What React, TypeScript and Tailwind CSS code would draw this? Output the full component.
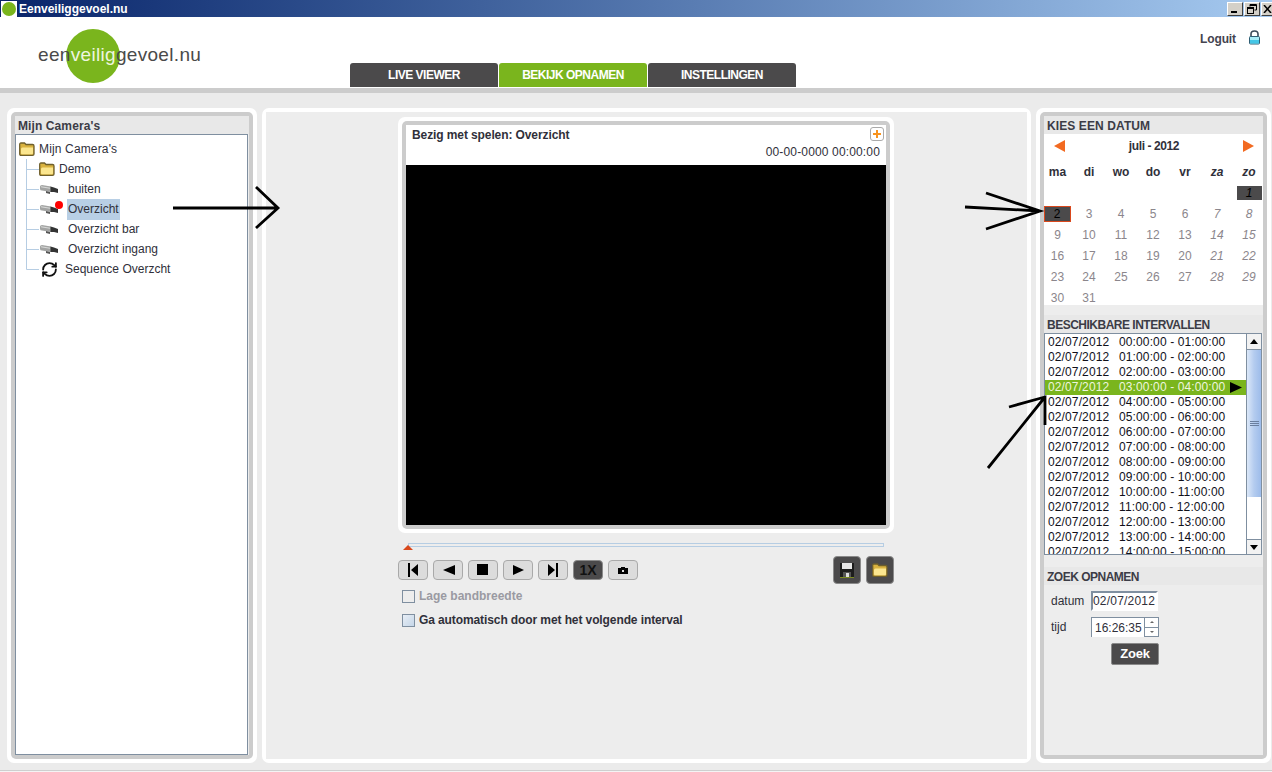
import React from "react";
import { RefreshCw } from "lucide-react";

const Folder = () => (
  <svg width="16" height="14" viewBox="0 0 16 14" className="shrink-0">
    <path d="M.7 2.5Q.7 1 2 1H5.5L7 2.5H13.5Q15 2.5 15 4V12Q15 13.3 13.5 13.3H2Q.7 13.3 .7 12Z" fill="#d9b23f" stroke="#6e5f2c" strokeWidth="1.3" />
    <path d="M2 7Q2 5.5 3.5 5.5H14V11Q14 12.3 13 12.3H3Q2 12.3 2 11Z" fill="#fbe68f" />
  </svg>
);

const Camera = () => (
  <svg width="18" height="11" viewBox="0 0 18 11" className="shrink-0">
    <path d="M0 2.5Q0 1 2 1L11 2.5V8L2 6.5Q0 6.5 0 5Z" fill="#a3a4a3" />
    <path d="M1 2.2L10 3.7V4.7L1 3.2Z" fill="#d8d9d8" />
    <path d="M10.5 2.5L14 3.5L18 5V9L14 8L10.5 8Z" fill="#333434" />
    <path d="M6 7L10 8V10L6 9Z" fill="#555" />
  </svg>
);

const Connector = ({ last }: { last?: boolean }) => (
  <svg width="13" height="20" viewBox="0 0 13 20" className="shrink-0">
    <path d={last ? "M.5 0V10.5H13" : "M.5 0V20M.5 10.5H13"} stroke="#b6cde3" fill="none" />
  </svg>
);

const Lock = () => (
  <svg width="13" height="15" viewBox="0 0 13 15">
    <path d="M3 7V4Q3 1 6.5 1T10 4V7" fill="none" stroke="#3b4a5a" strokeWidth="1.6" />
    <rect x="1.5" y="6.5" width="10" height="7.5" rx="1" fill="#a6ecf8" stroke="#2f5e74" />
    <rect x="2" y="10" width="9" height="3.5" fill="#45c6e6" />
  </svg>
);

const WinBtn = ({ children, w = "w-[16px]" }: { children: React.ReactNode; w?: string }) => (
  <div className={`${w} h-[14px] bg-[#d4d0c8] border border-t-white border-l-white border-r-[#404040] border-b-[#404040] flex items-center justify-center`}>
    {children}
  </div>
);

const Tab = ({ label, active, w }: { label: string; active?: boolean; w: string }) => (
  <div className={`${w} h-[24px] rounded-t-[3px] flex items-center justify-center text-white text-[12px] font-bold tracking-[-0.5px] ${active ? "bg-[#7ab51d]" : "bg-[#4b4a4b]"}`}>
    {label}
  </div>
);

const Title = ({ children, tight }: { children: React.ReactNode; tight?: boolean }) => (
  <div className={`h-[18px] shrink-0 bg-[#e8e8e8] pl-[3px] pt-[2px] flex items-center text-[12px] font-bold text-[#3c3c46] ${tight ? "tracking-[-0.5px]" : "tracking-[0.1px]"}`}>{children}</div>
);

const Panel = ({ w, children }: { w: string; children: React.ReactNode }) => (
  <div className={`${w} h-[655px] bg-white rounded-[7px] p-[4px]`}>
    <div className="h-full bg-[#cccccc] rounded-[5px] p-[4px]">
      <div className="h-full bg-[#ededed] flex flex-col">{children}</div>
    </div>
  </div>
);

const Ctl = ({ children, dark }: { children: React.ReactNode; dark?: boolean }) => (
  <div className={`w-[30px] h-[20px] rounded-[4px] border flex items-center justify-center ${dark ? "bg-[#4b4a4b] border-[#8a8a8a]" : "bg-[#dcdcdc] border-[#a9a9a9]"}`}>
    {children}
  </div>
);

const treeCams = ["buiten", "Overzicht", "Overzicht bar", "Overzicht ingang"];
const week = ["ma", "di", "wo", "do", "vr", "za", "zo"];
const days: (number | null)[] = [null, null, null, null, null, null, 1];
for (let d = 2; d <= 31; d++) days.push(d);

const Day = ({ d, i }: { d: number | null; i: number }) => {
  const weekend = i % 7 >= 5;
  let inner = <span className={`text-[#8b868c] ${weekend ? "italic" : ""}`}>{d}</span>;
  if (d === 1)
    inner = <span className="w-[25px] h-[14px] bg-[#4b4a4b] text-black italic flex items-center justify-center">1</span>;
  if (d === 2)
    inner = <span className="w-[27px] h-[16px] bg-[#4b4a4b] border border-[#d9481c] text-black flex items-center justify-center -ml-[1px]">2</span>;
  return <div className="h-[21px] flex items-center justify-center text-[12px]">{d ? inner : null}</div>;
};

const Ctrl = [
  <svg key="a" width="12" height="14" viewBox="0 0 12 14"><path d="M1 0H3V14H1ZM11 1V13L4 7Z" /></svg>,
  <svg key="b" width="13" height="12" viewBox="0 0 13 12"><path d="M13 1V11L1 6Z" /></svg>,
  <svg key="c" width="12" height="12" viewBox="0 0 12 12"><rect width="11" height="11" /></svg>,
  <svg key="d" width="13" height="12" viewBox="0 0 13 12"><path d="M1 1V11L12 6Z" /></svg>,
  <svg key="e" width="12" height="14" viewBox="0 0 12 14"><path d="M9 0H11V14H9ZM1 1V13L8 7Z" /></svg>,
];

export default function App() {
  return (
    <div className="relative w-[1272px] h-[772px] overflow-hidden flex flex-col bg-[#ebebeb] font-['Liberation_Sans',sans-serif] text-[12px] text-[#30303a]">
      {/* title bar */}
      <div className="h-[17px] shrink-0 bg-gradient-to-r from-[#0a246a] to-[#a6caf0] flex items-center pl-[1px]">
        <div className="w-[16px] h-[16px] bg-white flex items-center justify-center">
          <div className="w-[14px] h-[14px] rounded-full bg-[#7ab51d]" />
        </div>
        <span className="ml-[2px] text-white font-bold text-[12px]">Eenveiliggevoel.nu</span>
        <div className="ml-auto flex items-center gap-[1px] -mr-[2px]">
          <WinBtn><svg width="8" height="8" viewBox="0 0 8 8"><rect x="0" y="6" width="6" height="2" /></svg></WinBtn>
          <WinBtn><svg width="10" height="10" viewBox="0 0 10 10" fill="none" stroke="#000"><path d="M3 2.5V.5H9.5V6H7.5" /><path d="M3 1.5H9" /><rect x=".5" y="3.5" width="6" height="6" /><path d="M1 4.5H6" /></svg></WinBtn>
          <WinBtn w="w-[13px]"><svg width="9" height="8" viewBox="0 0 9 8" stroke="#000" strokeWidth="1.5"><path d="M1 0L8 8M8 0L1 8" /></svg></WinBtn>
        </div>
      </div>

      {/* header */}
      <div className="h-[71px] shrink-0 bg-white flex">
        <div className="w-[350px] shrink-0 pl-[38px] pt-[26px]">
          <div className="relative text-[19px] leading-[24px] tracking-[0.32px] text-[#4a4a4a] whitespace-nowrap">
            <div className="absolute left-[28px] -top-[14px] w-[54px] h-[54px] rounded-full bg-[#7ab51d]" />
            <span className="relative">een<span className="text-[#eef5df]">veilig</span>gevoel.nu</span>
          </div>
        </div>
        <div className="self-end flex gap-[1px] mb-[1px]">
          <Tab label="LIVE VIEWER" w="w-[148px]" />
          <Tab label="BEKIJK OPNAMEN" active w="w-[148px]" />
          <Tab label="INSTELLINGEN" w="w-[148px]" />
        </div>
        <div className="ml-auto pt-[13px] pr-[11px] flex items-start gap-[12px]">
          <span className="font-bold text-[#44444f] tracking-[-0.1px]">Loguit</span>
          <Lock />
        </div>
      </div>
      <div className="h-[5px] shrink-0 bg-[#cccccc]" />

      {/* body */}
      <div className="flex-1 flex gap-[5px] pl-[7px] pt-[15px]">
        {/* left */}
        <Panel w="w-[250px]">
          <Title>Mijn Camera's</Title>
          <div className="mr-[1px] h-[621px] bg-white border border-[#7f8fa0] pl-[3px] pt-[4px]">
            <div className="h-[20px] flex items-center gap-[4px]">
              <Folder />
              <span className="tracking-[0.15px]">Mijn Camera's</span>
            </div>
            <div className="ml-[7px]">
              <div className="h-[20px] flex items-center">
                <Connector />
                <Folder />
                <span className="ml-[4px]">Demo</span>
              </div>
              {treeCams.map((name) => (
                <div key={name} className="h-[20px] flex items-center">
                  <Connector />
                  <div className="relative w-[28px] pl-[1px]">
                    <Camera />
                    {name === "Overzicht" && (
                      <div className="absolute left-[16px] -top-[3px] w-[8px] h-[8px] rounded-full bg-[#ff0000]" />
                    )}
                  </div>
                  {name === "Overzicht" ? (
                    <span className="h-[21px] w-[53px] bg-[#b8cfe5] pl-[1px] flex items-center">{name}</span>
                  ) : (
                    <span className="pl-[1px]">{name}</span>
                  )}
                </div>
              ))}
              <div className="h-[20px] flex items-center">
                <Connector last />
                <RefreshCw size={17} strokeWidth={2.6} color="#111" className="ml-[2px] shrink-0" />
                <span className="ml-[7px]">Sequence Overzcht</span>
              </div>
            </div>
          </div>
        </Panel>

        {/* center */}
        <div className="w-[769px] h-[655px] bg-white rounded-[7px] p-[4px]">
          <div className="h-full bg-[#ededed] pl-[132px] pt-[5px]">
            <div className="w-[496px] bg-white rounded-[7px] p-[4px]">
              <div className="bg-[#cccccc] rounded-[5px] p-[4px]">
                <div className="bg-white h-[40px] relative pl-[6px] pt-[1px]">
                  <div className="font-bold text-[12px] leading-[18px] tracking-[-0.1px]">Bezig met spelen: Overzicht</div>
                  <div className="text-right pr-[6px] leading-[17px] tracking-[0.15px]">00-00-0000 00:00:00</div>
                  <div className="absolute right-[2px] top-[2px] w-[14px] h-[14px] rounded-[3px] border border-[#aaa] flex items-center justify-center">
                    <svg width="10" height="10" viewBox="0 0 10 10"><path d="M4 1H6V4H9V6H6V9H4V6H1V4H4Z" fill="#f7931e" /></svg>
                  </div>
                </div>
                <div className="bg-black h-[360px]" />
              </div>
            </div>

            <div className="relative mt-[10px] ml-[10px] w-[476px] h-[4px] border border-[#b6cde3] bg-[#ededed]">
              <div className="absolute -left-[6px] top-[1px] w-0 h-0 border-l-[5px] border-r-[5px] border-b-[5px] border-l-transparent border-r-transparent border-b-[#d9481c]" />
            </div>

            <div className="mt-[9px] w-[496px] flex items-center gap-[5px] h-[28px]">
              {Ctrl.map((icon, i) => <Ctl key={i}>{icon}</Ctl>)}
              <Ctl dark><span className="text-[14px] font-bold text-[#111]">1X</span></Ctl>
              <Ctl>
                <svg width="10" height="8" viewBox="0 0 10 8"><path d="M3 1H7V2H10V8H0V2H3Z" /><rect x="4" y="4" width="2" height="2" fill="#dcdcdc" /></svg>
              </Ctl>
              <div className="ml-auto flex gap-[5px]">
                <div className="w-[28px] h-[28px] rounded-[4px] bg-[#4b4a4b] border border-[#8a8a8a] flex items-center justify-center">
                  <svg width="14" height="16" viewBox="0 0 14 16"><path d="M0 1H14V15H0Z" fill="#1d1d1d" /><rect x="2" y="1" width="10" height="6" fill="#e6e6e6" /><rect x="3" y="10" width="8" height="5" fill="#555" /><rect x="6" y="11" width="3" height="4" fill="#ddd" /><rect y="15" width="14" height="1" fill="#7a8a20" /></svg>
                </div>
                <div className="w-[28px] h-[28px] rounded-[4px] bg-[#4b4a4b] border border-[#8a8a8a] flex items-center justify-center">
                  <Folder />
                </div>
              </div>
            </div>

            <div className="mt-[5px] ml-[4px] h-[14px] flex items-center gap-[4px]">
              <div className="w-[13px] h-[13px] border border-[#7f8fa0]" />
              <span className="font-bold text-[#9a9aa2]">Lage bandbreedte</span>
            </div>
            <div className="mt-[10px] ml-[4px] h-[14px] flex items-center gap-[4px]">
              <div className="w-[13px] h-[13px] border border-[#7f8fa0] bg-gradient-to-br from-[#e8eef5] to-[#c5d6e8]" />
              <span className="font-bold tracking-[-0.1px]">Ga automatisch door met het volgende interval</span>
            </div>
          </div>
        </div>

        {/* right */}
        <Panel w="w-[235px]">
          <Title>KIES EEN DATUM</Title>
          <div className="h-[171px] shrink-0 bg-white overflow-hidden">
            <div className="h-[24px] flex items-center justify-between pl-[10px] pr-[9px]">
              <svg width="11" height="12" viewBox="0 0 11 12"><path d="M11 0V12L0 6Z" fill="#f26a21" /></svg>
              <span className="font-bold tracking-[-0.4px]">juli - 2012</span>
              <svg width="11" height="12" viewBox="0 0 11 12"><path d="M0 0V12L11 6Z" fill="#f26a21" /></svg>
            </div>
            <div className="-ml-[2px] grid grid-cols-[31px_repeat(6,32px)] mt-[3px]">
              {week.map((w, i) => (
                <div key={w} className={`h-[21px] flex items-center justify-center font-bold text-[12px] ${i >= 5 ? "italic" : ""}`}>{w}</div>
              ))}
              {days.map((d, i) => <Day key={i} d={d} i={i} />)}
            </div>
          </div>

          <div className="h-[10px] shrink-0" />
          <Title tight>BESCHIKBARE INTERVALLEN</Title>
          <div className="h-[222px] shrink-0 mr-[1px] bg-white border border-[#7f8fa0] flex overflow-hidden">
            <div className="flex-1 overflow-hidden pt-[1px]">
              {Array.from({ length: 15 }, (_, h) => {
                const p = (n: number) => String(n).padStart(2, "0");
                const sel = h === 3;
                return (
                  <div key={h} className={`h-[15px] leading-[15px] pl-[3px] flex items-center text-[12px] tracking-[0.12px] whitespace-nowrap ${sel ? "bg-[#7ab51d] text-[#eef5df]" : "text-[#10101a]"}`}>
                    <span className="w-[71px]">02/07/2012</span>
                    <span>{p(h)}:00:00 - {p(h + 1)}:00:00</span>
                    {sel && <svg width="12" height="11" viewBox="0 0 12 11" className="ml-[5px]"><path d="M0 0V11L12 5.5Z" /></svg>}
                  </div>
                );
              })}
            </div>
            <div className="w-[15px] flex flex-col border-l border-[#7f8fa0] bg-white">
              <div className="h-[16px] bg-[#f2f2f2] border-b border-[#7f8fa0] flex items-center justify-center">
                <svg width="8" height="5" viewBox="0 0 8 5"><path d="M0 5L4 0L8 5Z" /></svg>
              </div>
              <div className="h-[147px] bg-gradient-to-r from-[#dce8f8] via-[#b4ccef] to-[#9dbcea] flex flex-col items-center justify-center gap-[1px]">
                <div className="w-[9px] h-px bg-[#6a7f9f]" />
                <div className="w-[9px] h-px bg-[#6a7f9f]" />
                <div className="w-[9px] h-px bg-[#6a7f9f]" />
              </div>
              <div className="flex-1" />
              <div className="h-[15px] bg-[#f2f2f2] border-t border-[#7f8fa0] flex items-center justify-center">
                <svg width="8" height="5" viewBox="0 0 8 5"><path d="M0 0L4 5L8 0Z" /></svg>
              </div>
            </div>
          </div>

          <div className="h-[12px] shrink-0" />
          <Title tight>ZOEK OPNAMEN</Title>
          <div className="mt-[6px] ml-[7px] h-[20px] flex items-center">
            <span className="w-[40px]">datum</span>
            <div className="w-[67px] h-[20px] bg-white border-2 border-l-[#7f8fa0] border-t-[#7f8fa0] border-r-white border-b-white flex items-center pl-[0px] text-[12px] tracking-[0.2px]">02/07/2012</div>
          </div>
          <div className="mt-[6px] ml-[7px] h-[20px] flex items-center">
            <span className="w-[40px]">tijd</span>
            <div className="w-[53px] h-[20px] bg-white border-l border-t border-[#7f8fa0] flex items-center pl-[3px] text-[12px]">16:26:35</div>
            <div className="w-[15px] h-[20px] flex flex-col border border-[#7f8fa0]">
              <div className="flex-1 border-b border-[#7f8fa0] bg-white flex items-center justify-center">
                <svg width="4" height="2" viewBox="0 0 4 2"><path d="M0 2L2 0L4 2Z" fill="#666" /></svg>
              </div>
              <div className="flex-1 bg-white flex items-center justify-center">
                <svg width="4" height="2" viewBox="0 0 4 2"><path d="M0 0L2 2L4 0Z" fill="#666" /></svg>
              </div>
            </div>
          </div>
          <div className="mt-[6px] ml-[67px] w-[48px] h-[22px] rounded-[2px] bg-[#4b4a4b] border border-[#8a8a8a] flex items-center justify-center text-white font-bold text-[13px] tracking-[-0.2px]">Zoek</div>
        </Panel>
      </div>

      <div className="h-[2px] shrink-0 bg-[#f4f4f4] border-t border-[#cfcfcf]" />

      {/* hand-drawn arrows over the screenshot */}
      <svg className="absolute inset-0 pointer-events-none" width="1272" height="772" viewBox="0 0 1272 772" fill="none" stroke="#000" strokeWidth="2.8">
        <path d="M173 208H277M256 187L278 208L256 228" />
        <path d="M965 207L1040 211M986 193L1040 211L986 229" />
        <path d="M988 468L1045 397M1009 407L1045 397V425" />
      </svg>
    </div>
  );
}
